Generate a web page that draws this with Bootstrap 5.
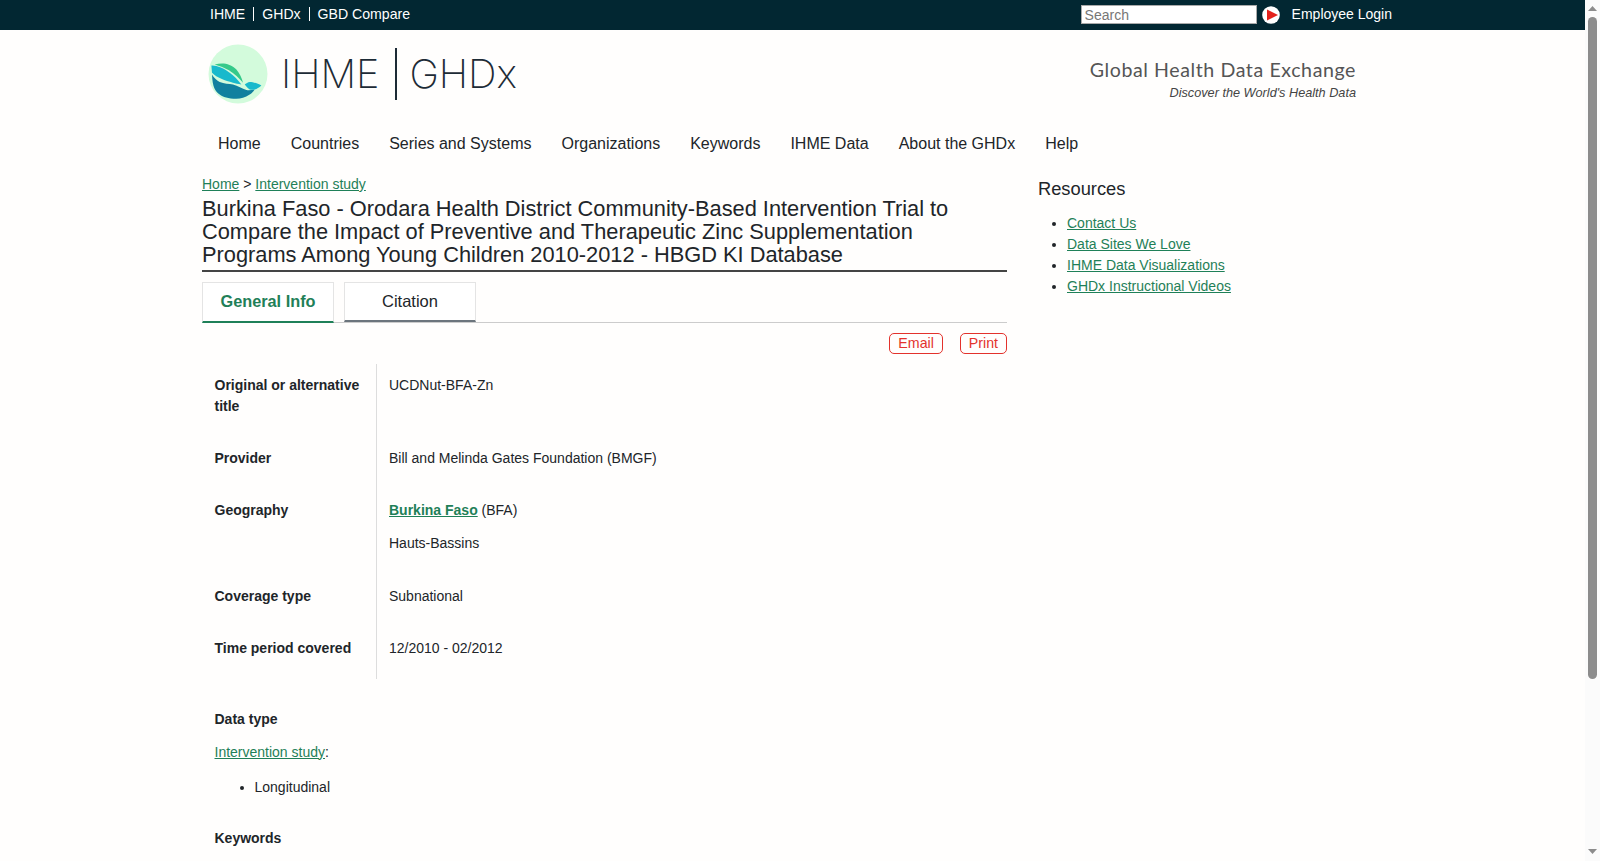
<!DOCTYPE html>
<html>
<head>
    <title>Burkina Faso - Orodara Health District Community-Based Intervention Trial | GHDx</title>
    <link href="https://cdn.jsdelivr.net/npm/bootstrap@5.3.0/dist/css/bootstrap.min.css" rel="stylesheet">
    <style>
        body { font-family: "Liberation Sans", Arial, sans-serif; font-size: 14px; line-height: 21px; color: #212529; background: #fffefd; }
        a { color: #1f8058; }
        .page-wrap { width: 1190px; margin-left: 202px; }
        .topbar { background: #022732; height: 30px; font-size: 14.1px; }
        .topbar a { color: #fff; text-decoration: none; }
        .toplinks { padding-bottom: 3px; }
        .toplinks a { padding: 0 8px; line-height: 14px; border-right: 1px solid #fff; display: block; }
        .toplinks a:last-child { border-right: 0; }
        .login-link { padding-bottom: 1px; font-size: 14px; }
        .top-search { width: 176px; height: 19px; border: 1px solid #aaa; background: #fff; font-size: 14px; padding: 0 3px; line-height: 17px; border-radius: 0; outline: 0; margin-bottom: 1px; }
        .top-search::placeholder { color: #777; }
        .search-go { margin: 0 12px 0 5px; }
        .logo-bar { height: 88px; padding-right: 36px; }
        .logo-text { font-family: "Inter", sans-serif; font-weight: 200; font-size: 39.7px; color: #1d2b36; line-height: 1; padding-top: 2px; }
        .logo-sep { width: 2px; height: 52px; background: #1d2b36; margin: 0 12px 0 16px; }
        .logo-mark { margin-left: 6px; margin-right: 13px; }
        .tagline-box { padding-top: 12px; }
        .tagline { color: #555; font-family: "Lato", sans-serif; font-size: 19.6px; line-height: 24px; letter-spacing: .58px; }
        .tagline-sub { font-size: 12.7px; font-style: italic; color: #444; line-height: 18px; margin-top: 2px; }
        .main-nav { height: 40px; margin-top: 5px; margin-left: 1px; }
        .main-nav a { color: #212529; text-decoration: none; font-size: 16px; padding: 0 15px; }
        .main-col { width: 805px; }
        .breadcrumbs { margin-top: 11px; }
        h1.title { font-size: 21.8px; line-height: 23.2px; font-weight: 400; margin: 2px 0 0; padding-bottom: 3px; border-bottom: 2px solid #444; }
        .tabs-row { border-bottom: 1px solid #ccc; margin-top: 10px; height: 41px; gap: 10px; }
        .tab-item { width: 132px; height: 40px; border: 1px solid #e4e4e4; border-bottom: 2px solid #6c757d; background: #fff; font-size: 16.5px; color: #212529; text-decoration: none; text-align: center; line-height: 36px; }
        .tab-item.active { height: 41px; font-size: 16.3px; color: #1f8058; font-weight: 700; border-bottom-color: #1f8058; }
        .btn-row { margin-top: 10px; gap: 17px; }
        .btn-red { border: 1px solid #e3322c; color: #e3322c; border-radius: 5px; font-size: 14.2px; line-height: 19px; padding: 0 8px; text-decoration: none; display: block; }
        .info-table { margin-top: 10px; }
        .info-label { width: 175px; flex-shrink: 0; padding: 11px 12px 20px 12.5px; font-weight: 700; border-right: 1px solid #ddd; }
        .info-value { padding: 11px 12px 20px; }
        .info-value p { margin: 0 0 12px; }
        .info-value p:last-child { margin-bottom: 1px; }
        .info-table .d-flex:last-child .info-label { padding-bottom: 19px; }
        .info-block { padding-left: 12.5px; margin-top: 30px; }
        .info-block p { margin: 0 0 12px; }
        .info-block p:last-child { margin-bottom: 0; }
        .info-block ul { padding-left: 40px; margin: 14px 0 0; }
        .side-col { margin-left: 31px; width: 340px; }
        .side-title { font-size: 18.3px; line-height: 24px; font-weight: 400; margin: 14px 0 0; }
        .side-list { padding-left: 29px; margin-top: 12px; }
        .scroll-track { position: fixed; top: 0; right: 0; width: 15px; height: 100vh; background: #fbfbfb; }
        .scroll-thumb { position: absolute; top: 17px; left: 3px; width: 9px; height: 662px; background: #8c8c8c; border-radius: 5px; }
        .scroll-up { position: absolute; top: 6px; left: 3px; display: block; }
        .scroll-down { position: absolute; top: 849px; left: 3px; display: block; }
    </style>
</head>
<body>
    <div class="topbar">
        <div class="page-wrap d-flex align-items-center justify-content-between h-100">
            <div class="toplinks d-flex">
                <a href="#">IHME</a>
                <a href="#">GHDx</a>
                <a href="#">GBD Compare</a>
            </div>
            <div class="d-flex align-items-center">
                <input class="top-search" type="text" placeholder="Search">
                <svg class="search-go" width="18" height="18" viewBox="0 0 18 18"><circle cx="9" cy="9" r="8.8" fill="#fff"/><polygon points="5,3.5 16,9 5,14.5" fill="#e3221c"/></svg>
                <a class="login-link" href="#">Employee Login</a>
            </div>
        </div>
    </div>

    <div class="page-wrap">
        <div class="logo-bar d-flex align-items-center justify-content-between">
            <div class="d-flex align-items-center">
                <svg class="logo-mark" width="60" height="60" viewBox="0 0 60 60">
                    <circle cx="30" cy="30" r="29.5" fill="#d3fbdc"/>
                    <path d="M6.7 20.5 C14 18.5 22 19 28.4 25.5 C31.5 29 34 34 35 38.8 C32 35 29 32.5 26.7 30.5 C22 26.5 17 23.5 6.7 20.5Z" fill="#35c98a"/>
                    <path d="M3.4 21.5 C8 21 16 24 21.7 28.8 C26 32 30 36 33.4 40.5 C30 40 27.5 39.5 25 38.8 C17 36.5 9 34 4 28.8Z" fill="#18b9cc"/>
                    <path d="M4 30.5 C6 34 9 36.5 11.7 38 C16 39.5 21 40 25 40.5 C30 42 34 44.5 38.4 46 C41 46.5 44 46 46.7 45.5 C45 48 43.5 49.5 41.7 50.5 C37 53.5 33 54.8 28.4 54.8 C20 54.8 15 53 11.7 50.5 C7 47 4.5 43 4 30.5Z" fill="#11809f"/>
                    <path d="M36.7 40.5 C38 39.5 40 38 41.7 38 C45 38 50 39.5 53.4 41.5 C51 43.5 49 45 46.7 45.5 C45 45.8 43 45.7 41.7 45.5 C40 44.5 38 42 36.7 40.5Z" fill="#18b9cc"/>
                </svg>
                <span class="logo-text">IHME</span>
                <span class="logo-sep"></span>
                <span class="logo-text">GHDx</span>
            </div>
            <div class="tagline-box text-end">
                <div class="tagline">Global Health Data Exchange</div>
                <div class="tagline-sub">Discover the World's Health Data</div>
            </div>
        </div>

        <nav class="main-nav d-flex align-items-center">
            <a href="#">Home</a>
            <a href="#">Countries</a>
            <a href="#">Series and Systems</a>
            <a href="#">Organizations</a>
            <a href="#">Keywords</a>
            <a href="#">IHME Data</a>
            <a href="#">About the GHDx</a>
            <a href="#">Help</a>
        </nav>

        <div class="d-flex">
            <main class="main-col">
                <div class="breadcrumbs"><a href="#">Home</a> &gt; <a href="#">Intervention study</a></div>
                <h1 class="title">Burkina Faso - Orodara Health District Community-Based Intervention Trial to Compare the Impact of Preventive and Therapeutic Zinc Supplementation Programs Among Young Children 2010-2012 - HBGD KI Database</h1>

                <div class="tabs-row d-flex align-items-start">
                    <a class="tab-item active" href="#">General Info</a>
                    <a class="tab-item" href="#">Citation</a>
                </div>

                <div class="btn-row d-flex justify-content-end">
                    <a class="btn-red" href="#">Email</a>
                    <a class="btn-red" href="#">Print</a>
                </div>

                <div class="info-table">
                    <div class="d-flex">
                        <div class="info-label">Original or alternative title</div>
                        <div class="info-value">UCDNut-BFA-Zn</div>
                    </div>
                    <div class="d-flex">
                        <div class="info-label">Provider</div>
                        <div class="info-value">Bill and Melinda Gates Foundation (BMGF)</div>
                    </div>
                    <div class="d-flex">
                        <div class="info-label">Geography</div>
                        <div class="info-value">
                            <p><a class="fw-bold" href="#">Burkina Faso</a> (BFA)</p>
                            <p>Hauts-Bassins</p>
                        </div>
                    </div>
                    <div class="d-flex">
                        <div class="info-label">Coverage type</div>
                        <div class="info-value">Subnational</div>
                    </div>
                    <div class="d-flex">
                        <div class="info-label">Time period covered</div>
                        <div class="info-value">12/2010 - 02/2012</div>
                    </div>
                </div>

                <div class="info-block">
                    <p class="fw-bold">Data type</p>
                    <a href="#">Intervention study</a>:
                    <ul>
                        <li>Longitudinal</li>
                    </ul>
                </div>
                <div class="info-block">
                    <p class="fw-bold">Keywords</p>
                </div>
            </main>

            <aside class="side-col">
                <h2 class="side-title">Resources</h2>
                <ul class="side-list">
                    <li><a href="#">Contact Us</a></li>
                    <li><a href="#">Data Sites We Love</a></li>
                    <li><a href="#">IHME Data Visualizations</a></li>
                    <li><a href="#">GHDx Instructional Videos</a></li>
                </ul>
            </aside>
        </div>
    </div>

    <div class="scroll-track">
        <svg class="scroll-up" width="9" height="5" viewBox="0 0 9 5"><polygon points="4.5,0 9,5 0,5" fill="#8c8c8c"/></svg>
        <div class="scroll-thumb"></div>
        <svg class="scroll-down" width="9" height="5" viewBox="0 0 9 5"><polygon points="0,0 9,0 4.5,5" fill="#8c8c8c"/></svg>
    </div>
    <script src="https://cdn.jsdelivr.net/npm/bootstrap@5.3.0/dist/js/bootstrap.bundle.min.js"></script>
</body>
</html>
